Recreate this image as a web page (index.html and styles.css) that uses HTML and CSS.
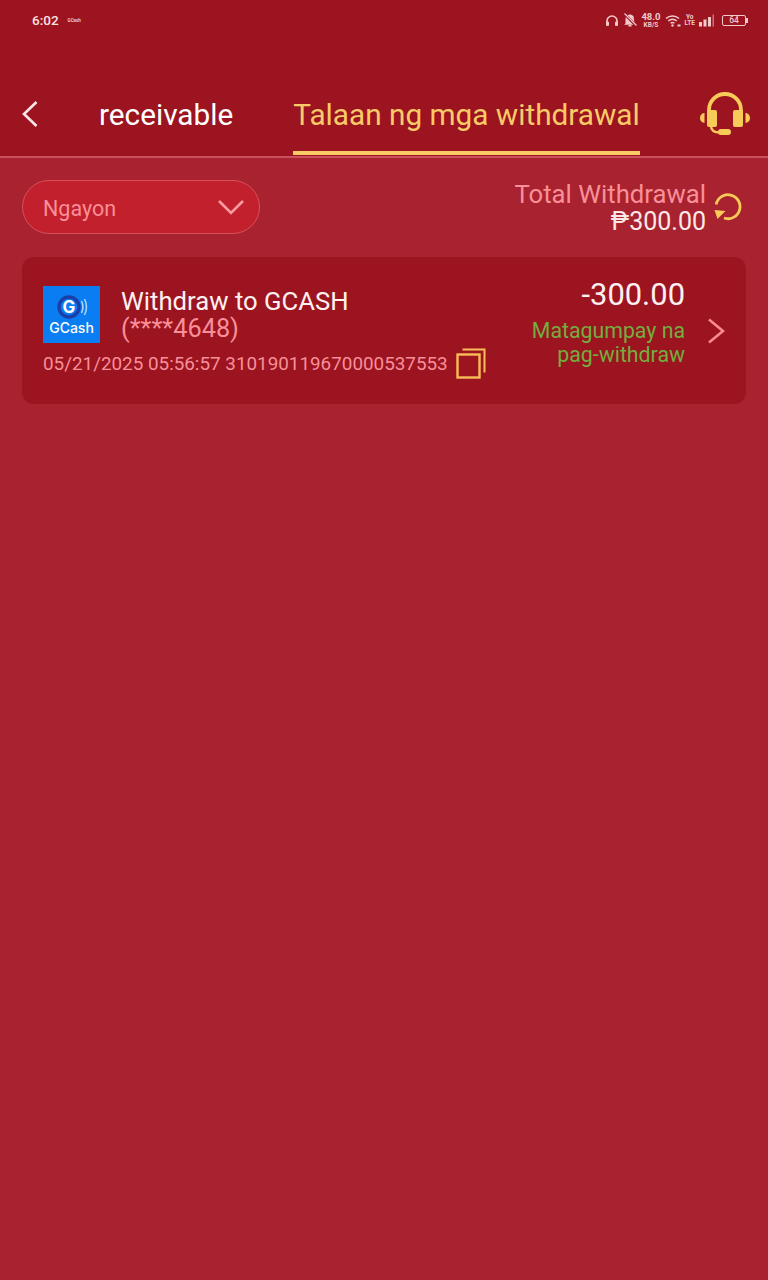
FILE: index.html
```html
<!DOCTYPE html>
<html lang="en">
<head>
    <meta charset="UTF-8">
    <meta name="viewport" content="width=device-width, initial-scale=1.0">
    <title>Talaan ng mga withdrawal</title>
    <link rel="stylesheet" href="styles.css">
</head>
<body>
    <header class="top">
        <div class="status">
            <div class="status-left">
                <span class="clock">6:02</span>
                <span class="notif">GCash</span>
            </div>
            <div class="status-right">
                <svg class="st-icon" width="14" height="13" viewBox="0 0 14 13"><path d="M2 10V7a5 5 0 0 1 10 0v3" fill="none" stroke="#f3c9c9" stroke-width="1.6"/><rect x="1" y="7.5" width="3" height="4.5" rx="1" fill="#f3c9c9"/><rect x="10" y="7.5" width="3" height="4.5" rx="1" fill="#f3c9c9"/></svg>
                <svg class="st-icon" width="14" height="14" viewBox="0 0 14 14"><path d="M2.500 10.500V6a4.500 4.500 0 0 1 8-2.800l1 7.300 1.500 1.300H1z" fill="#f3c9c9"/><rect x="5.500" y="12" width="3" height="1.500" fill="#f3c9c9"/><path d="M1 .5l12 12" stroke="#9b1420" stroke-width="2.600"/><path d="M1.500 .5l12 12" stroke="#f3c9c9" stroke-width="1.200"/></svg>
                <span class="speed"><b>48.0</b><b class="unit">KB/S</b></span>
                <svg class="st-icon" width="16" height="13" viewBox="0 0 16 13"><g fill="none" stroke="#f3c9c9" stroke-width="1.500"><path d="M1 4.500a9.500 9.500 0 0 1 13 0"/><path d="M3.300 7a6 6 0 0 1 8.400 0"/><path d="M5.600 9.300a2.800 2.800 0 0 1 3.800 0"/></g><circle cx="7.500" cy="11.500" r="1.200" fill="#f3c9c9"/><rect x="12.500" y="10.500" width="3" height="2" fill="#f3c9c9"/></svg>
                <span class="volte"><b>Yo</b><b>LTE</b></span>
                <svg class="st-icon" width="15" height="13" viewBox="0 0 15 13"><rect x="0" y="8" width="3" height="4.500" fill="#f3c9c9"/><rect x="4.500" y="5.500" width="3" height="7" fill="#f3c9c9"/><rect x="9" y="3" width="3" height="9.500" fill="#f3c9c9"/><rect x="13.500" y="0.500" width="1.500" height="12" fill="#c9737c"/></svg>
                <span class="battery">64</span>
            </div>
        </div>
        <nav class="tabs">
            <svg class="back" width="18" height="28" viewBox="0 0 18 28"><path d="M15.500 2L3 14l12.500 12" fill="none" stroke="#fbe6e6" stroke-width="2.600"/></svg>
            <a class="tab" href="#">receivable</a>
            <a class="tab tab-on" href="#">Talaan ng mga withdrawal</a>
            <svg class="support" width="50" height="44" viewBox="0 0 50 44"><path d="M9 21v-3a16 16 0 0 1 32 0v3" fill="none" stroke="#f8cb58" stroke-width="3.800"/><rect x="7" y="18" width="10" height="17" rx="2" fill="#f8cb58"/><rect x="33" y="18" width="10" height="17" rx="2" fill="#f8cb58"/><path d="M4.500 21v10a4.500 5 0 0 1 0-10zM45.500 21v10a4.500 5 0 0 0 0-10z" fill="#f8cb58"/><path d="M11 34c0 4 3 6.500 9 6.500" fill="none" stroke="#f8cb58" stroke-width="2.400"/><rect x="18" y="37" width="13" height="6" rx="3" fill="#f8cb58"/></svg>
        </nav>
    </header>

    <main class="content">
        <div class="filter-row">
            <div class="select">
                <span class="select-text">Ngayon</span>
                <svg width="28" height="18" viewBox="0 0 28 18"><path d="M2 3l12 12L26 3" fill="none" stroke="#fb9aa2" stroke-width="2.600"/></svg>
            </div>
            <div class="total">
                <div class="total-text">
                    <div class="total-label">Total Withdrawal</div>
                    <div class="total-value">₱300.00</div>
                </div>
                <svg class="refresh" width="30" height="30" viewBox="0 0 30 30"><path d="M3.200 12.500A12 12 0 1 1 11 26" fill="none" stroke="#f8cb58" stroke-width="2.800"/><path d="M1.500 18l11 1-8 8z" fill="#f8cb58"/></svg>
            </div>
        </div>

        <article class="record">
            <div class="record-main">
                <div class="record-head">
                    <svg class="gcash" width="57" height="57" viewBox="0 0 57 57">
                        <rect width="57" height="57" fill="#0a7df2"/>
                        <circle cx="26" cy="21" r="10" fill="none" stroke="#1a3fa8" stroke-width="3.400"/>
                        <text class="gcash-g" x="26" y="27">G</text>
                        <path d="M38.500 15a14 14 0 0 1 0 12M41.500 13a18 18 0 0 1 0 16" fill="none" stroke="#a9d2fb" stroke-width="1.600"/>
                        <text class="gcash-word" x="28.500" y="47">GCash</text>
                    </svg>
                    <div class="record-title">
                        <div class="record-name">Withdraw to GCASH</div>
                        <div class="record-acct">(****4648)</div>
                    </div>
                </div>
                <div class="record-meta">
                    <span>05/21/2025 05:56:57 310190119670000537553</span>
                    <svg width="30" height="31" viewBox="0 0 30 31"><path d="M6.500 1.500h22v23" fill="none" stroke="#f8bd58" stroke-width="2"/><rect x="1.500" y="6.500" width="22" height="23" fill="none" stroke="#f8bd58" stroke-width="2.400"/></svg>
                </div>
            </div>
            <div class="record-side">
                <div class="record-amount">-300.00</div>
                <div class="record-state">Matagumpay na<br>pag-withdraw</div>
            </div>
            <svg class="arrow" width="18" height="26" viewBox="0 0 18 26"><path d="M2 1.500l14 11.500L2 24.500" fill="none" stroke="#fb8a93" stroke-width="2.600"/></svg>
        </article>
    </main>
</body>
</html>
```

FILE: styles.css
```css
* {
    box-sizing: border-box;
}
html, body {
    height: 100%;
}
body {
    margin: 0;
    font-family: Roboto, "Liberation Sans", sans-serif;
    background-color: #a8222f;
}
.top {
    height: 158px;
    background-color: #9b1420;
    border-bottom: 2px solid #c9505c;
}
.status {
    height: 40px;
    padding: 0 20px 0 32px;
    display: flex;
    align-items: center;
    justify-content: space-between;
}
.status-left {
    display: flex;
    align-items: center;
    gap: 9px;
}
.clock {
    font-size: 13.500px;
    font-weight: 500;
    color: #fbe3e3;
}
.notif {
    font-size: 4.500px;
    font-weight: 700;
    color: #f3c9c9;
}
.status-right {
    display: flex;
    align-items: center;
    gap: 4px;
    color: #f3c9c9;
}
.speed, .volte {
    display: flex;
    flex-direction: column;
    align-items: center;
    line-height: 1;
}
.speed b {
    font-size: 9.500px;
    font-weight: 700;
}
.speed .unit {
    font-size: 6.500px;
}
.volte b {
    font-size: 6.500px;
    font-weight: 700;
}
.battery {
    position: relative;
    width: 24px;
    height: 11px;
    margin-left: 4px;
    margin-right: 2px;
    border: 1px solid #f3c9c9;
    border-radius: 2px;
    font-size: 8.500px;
    line-height: 9px;
    text-align: center;
    font-weight: 500;
}
.battery::after {
    content: "";
    position: absolute;
    top: 2px;
    right: -3px;
    width: 2px;
    height: 5px;
    background-color: #f3c9c9;
}
.tabs {
    height: 116px;
    padding: 32px 18px 0 21px;
    display: flex;
    align-items: flex-start;
}
.back {
    margin-top: 28px;
}
.tab {
    height: 83px;
    padding-top: 26px;
    font-size: 29.750px;
    line-height: 34px;
    color: #fff;
    text-decoration: none;
    white-space: nowrap;
}
.tabs .tab:nth-of-type(1) {
    margin-left: 60px;
}
.tab-on {
    margin-left: 60px;
    color: #f8cb68;
    border-bottom: 4px solid #f8cb68;
}
.support {
    margin-left: auto;
    margin-top: 20px;
    flex: none;
}
.content {
    padding: 22px 22px 0;
}
.filter-row {
    display: flex;
    align-items: center;
    justify-content: space-between;
    height: 54px;
    margin-bottom: 23px;
}
.select {
    width: 238px;
    height: 54px;
    padding: 0 14px 0 20px;
    display: flex;
    align-items: center;
    justify-content: space-between;
    border: 1px solid #d9505c;
    border-radius: 27px;
    background-color: #c2202c;
    color: #f98f98;
    font-size: 21.500px;
}
.select-text {
    margin-top: 2px;
}
.total {
    display: flex;
    align-items: center;
    gap: 7px;
    margin-right: 3px;
}
.total-text {
    text-align: right;
}
.total-label {
    font-size: 25.700px;
    line-height: 28px;
    color: #f98f98;
    padding-top: 1px;
}
.total-value {
    font-size: 25px;
    line-height: 28px;
    color: #fbe9e9;
}
.record {
    width: 724px;
    height: 147px;
    padding: 29px 21px 0 21px;
    display: flex;
    align-items: flex-start;
    border-radius: 12px;
    background-color: #9b1420;
}
.record-main {
    flex: none;
}
.record-head {
    display: flex;
    gap: 21px;
}
.gcash-g {
    font-family: Inter, Roboto, sans-serif;
    font-size: 17px;
    font-weight: 700;
    fill: #fff;
    text-anchor: middle;
}
.gcash-word {
    font-family: Inter, Roboto, sans-serif;
    font-size: 14px;
    font-weight: 500;
    fill: #fff;
    text-anchor: middle;
}
.record-name {
    font-size: 25.700px;
    line-height: 28px;
    margin-top: 1px;
    color: #fdf0f0;
}
.record-acct {
    font-size: 25.300px;
    line-height: 28px;
    color: #f98f98;
}
.record-meta {
    display: flex;
    align-items: center;
    gap: 8px;
    margin-top: 5px;
    font-size: 18.850px;
    color: #f98f98;
    white-space: nowrap;
}
.record-side {
    flex: 1;
    margin-top: -9px;
    text-align: right;
}
.record-amount {
    font-size: 30.900px;
    line-height: 36px;
    color: #fdf0f0;
}
.record-state {
    margin-top: 6px;
    font-size: 21.300px;
    line-height: 24px;
    color: #74ad3f;
}
.arrow {
    flex: none;
    margin-left: 22px;
    margin-top: 32px;
}
```
